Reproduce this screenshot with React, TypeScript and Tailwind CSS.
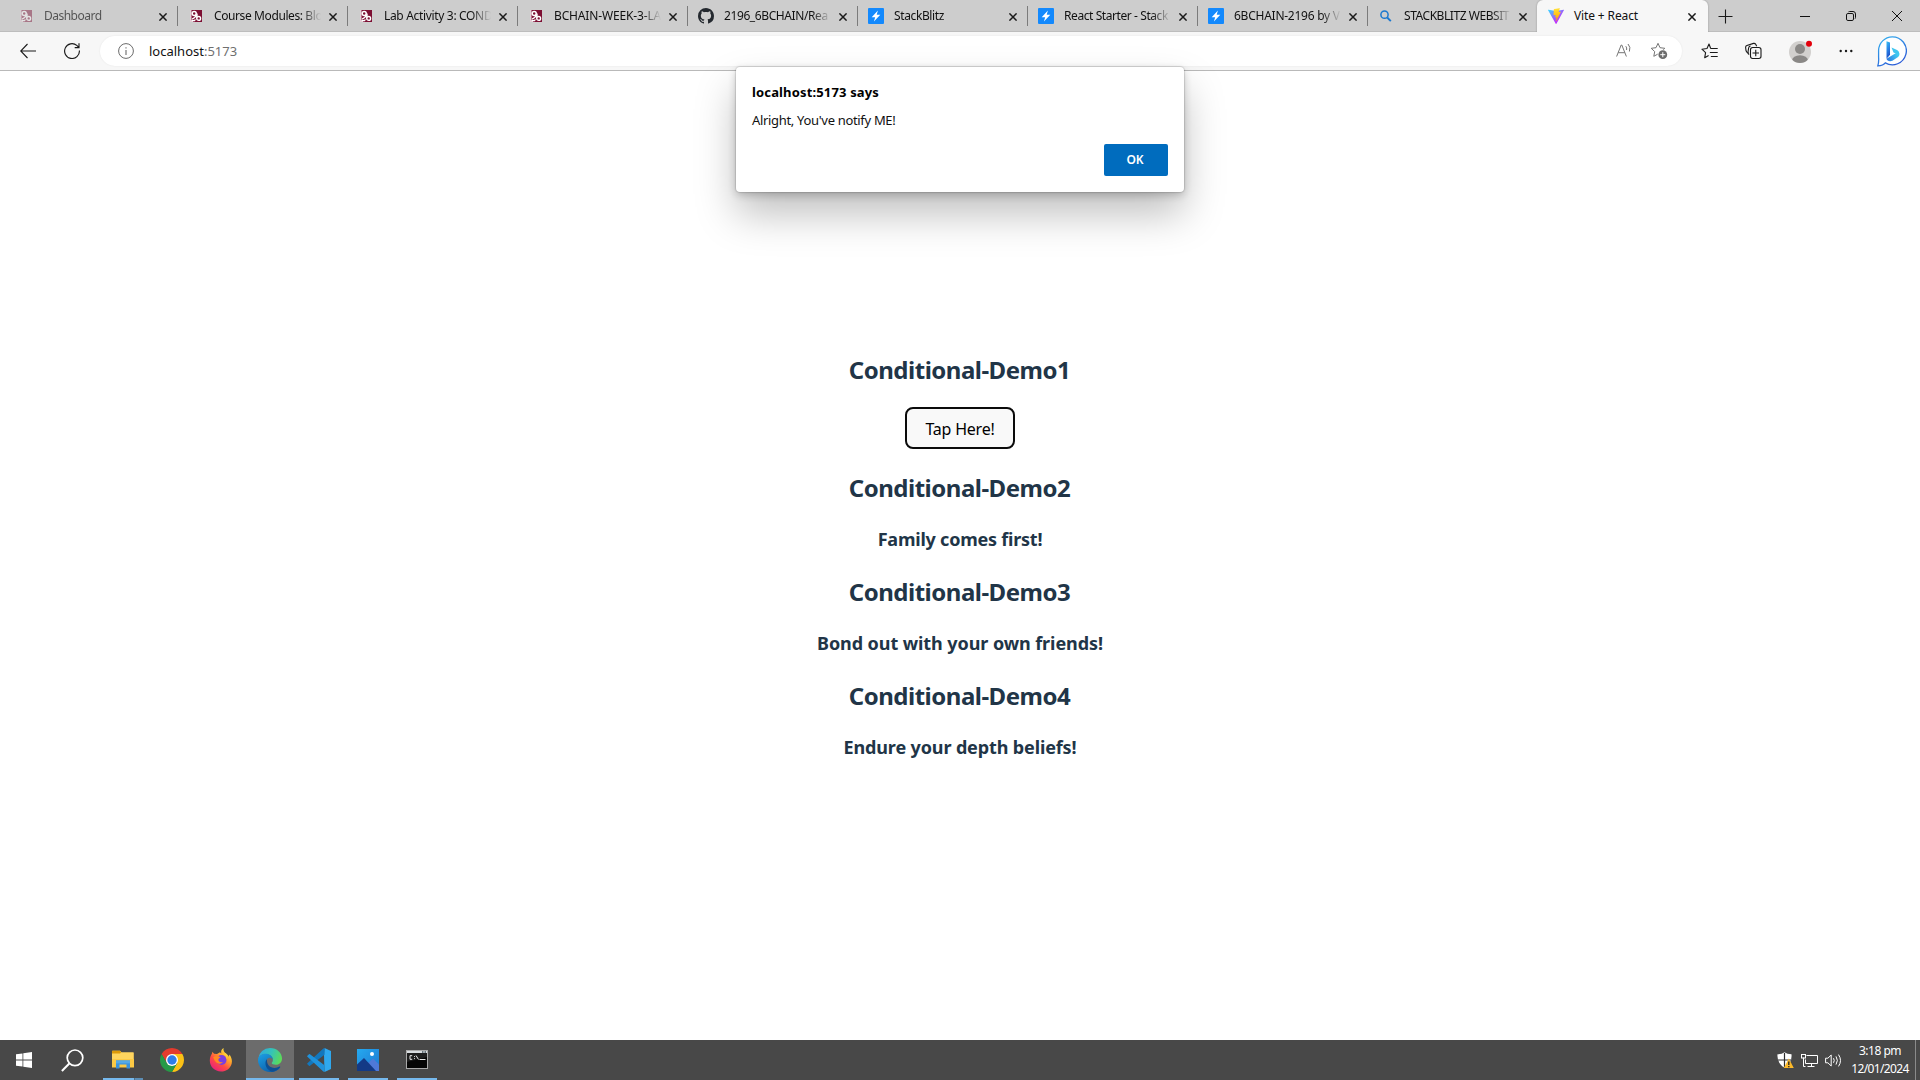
import React from "react";
import { VscGithubInverted } from "react-icons/vsc";

type TabInfo = { title: string; icon: React.ReactNode; tracking: string; faded?: boolean };

function MoodleIcon({ dim }: { dim?: boolean }) {
  return (
    <svg width="12" height="12" viewBox="0 0 12 12" className={dim ? "-ml-px opacity-45" : "-ml-px"}>
      <rect width="12" height="12" fill="#7d0f33" />
      <path d="M0 6.500V12h3.500L1.500 9.500V0H0z" fill="#e3ccd4" />
      <circle cx="4.200" cy="3.600" r="2" fill="#7d0f33" stroke="#fff" strokeWidth="1.500" />
      <path d="M6.300 4.500c-.3 2-1.500 3.500-4.300 4.600M7 3.600v5.600" fill="none" stroke="#fff" strokeWidth="1.400" />
      <circle cx="8.700" cy="8.400" r="1.900" fill="#7d0f33" stroke="#fff" strokeWidth="1.400" />
      <path d="M2 10.600h2.600l.8-1.200" fill="none" stroke="#fff" strokeWidth="1.100" />
    </svg>
  );
}

function StackBlitzIcon() {
  return (
    <svg width="16" height="16" viewBox="0 0 16 16">
      <rect width="16" height="16" rx="1" fill="#1389fd" />
      <path d="M9.900 2.600 3.700 9.200h3.500L5.900 13.400l6.400-6.600H8.700z" fill="#fff" />
    </svg>
  );
}

function BlueSearchIcon() {
  return (
    <svg width="16" height="16" viewBox="0 0 16 16" fill="none" stroke="#1b78cf">
      <circle cx="6.500" cy="6.700" r="3.600" strokeWidth="1.500" />
      <path d="m9.200 9.500 3.600 3.600" strokeWidth="1.900" />
    </svg>
  );
}

function ViteIcon() {
  return (
    <svg width="16" height="16" viewBox="0 0 256 257">
      <defs>
        <linearGradient id="viteA" x1="-.828%" x2="57.636%" y1="7.652%" y2="78.411%">
          <stop offset="0%" stopColor="#41D1FF" />
          <stop offset="100%" stopColor="#BD34FE" />
        </linearGradient>
        <linearGradient id="viteB" x1="43.376%" x2="50.316%" y1="2.242%" y2="89.03%">
          <stop offset="0%" stopColor="#FFEA83" />
          <stop offset="8.333%" stopColor="#FFDD35" />
          <stop offset="100%" stopColor="#FFA800" />
        </linearGradient>
      </defs>
      <path fill="url(#viteA)" d="M255.153 37.938L134.897 252.976c-2.483 4.440-8.862 4.466-11.382.048L.875 37.958c-2.746-4.814 1.371-10.646 6.827-9.670l120.385 21.517a6.537 6.537 0 0 0 2.322-.004l117.867-21.483c5.438-.991 9.574 4.796 6.877 9.620Z" />
      <path fill="url(#viteB)" d="M185.432.063L96.440 17.501a3.268 3.268 0 0 0-2.634 3.014l-5.474 92.456a3.268 3.268 0 0 0 3.997 3.378l24.777-5.718c2.318-.535 4.413 1.507 3.936 3.838l-7.361 36.047c-.495 2.426 1.782 4.500 4.151 3.780l15.304-4.649c2.372-.720 4.652 1.360 4.150 3.788l-11.698 56.621c-.732 3.542 3.979 5.473 5.943 2.437l1.313-2.028l72.516-144.720c1.215-2.423-.880-5.186-3.540-4.672l-25.505 4.922c-2.396.462-4.435-1.770-3.759-4.114l16.646-57.705c.677-2.350-1.370-4.583-3.769-4.113Z" />
    </svg>
  );
}

function CloseX() {
  return (
    <svg width="8" height="8" viewBox="0 0 8 8" stroke="#1a1a1a" strokeWidth="1.5" fill="none">
      <path d="m.4.4 7.200 7.200M7.600.4.4 7.600" />
    </svg>
  );
}

const tabs: TabInfo[] = [
  { title: "Dashboard", icon: <MoodleIcon dim />, tracking: "tracking-[-0.51px]", faded: true },
  { title: "Course Modules: Blo", icon: <MoodleIcon />, tracking: "tracking-[-0.4px]" },
  { title: "Lab Activity 3: COND", icon: <MoodleIcon />, tracking: "tracking-[-0.33px]" },
  { title: "BCHAIN-WEEK-3-LA", icon: <MoodleIcon />, tracking: "tracking-[-0.15px]" },
  { title: "2196_6BCHAIN/Rea", icon: <VscGithubInverted size={16} color="#24292f" />, tracking: "tracking-[-0.4px]" },
  { title: "StackBlitz", icon: <StackBlitzIcon />, tracking: "tracking-[-0.38px]" },
  { title: "React Starter - Stack", icon: <StackBlitzIcon />, tracking: "tracking-[-0.42px]" },
  { title: "6BCHAIN-2196 by V", icon: <StackBlitzIcon />, tracking: "tracking-[-0.25px]" },
  { title: "STACKBLITZ WEBSIT", icon: <BlueSearchIcon />, tracking: "tracking-[-0.45px]" },
];

function Tab({ tab }: { tab: TabInfo }) {
  return (
    <div className="flex h-8 w-[170px] shrink-0 items-center">
      <div className="ml-[10px] flex w-4 shrink-0 justify-center">{tab.icon}</div>
      <div className={`ml-[10px] w-[107px] whitespace-nowrap text-xs leading-8 [mask-image:linear-gradient(to_right,#000_82%,transparent_100%)] ${tab.tracking} ${tab.faded ? "text-[#555]" : "text-[#111]"}`}>
        {tab.title}
      </div>
      <div className="ml-[7.5px] flex h-8 items-center pt-px">
        <CloseX />
      </div>
      <div className="ml-auto h-5 w-px bg-[#7b7b7b]" />
    </div>
  );
}

function TabStrip() {
  return (
    <div className="flex h-8 bg-[#cdcdcd] pl-2 shadow-[inset_0_-1px_0_#bdbdbd]">
      {tabs.map((t) => (
        <Tab key={t.title} tab={t} />
      ))}
      <div className="-ml-px flex h-8 w-[171px] items-center rounded-t-md bg-[#f7f7f7] pl-[11px] shadow-[0_0_2px_rgba(0,0,0,0.3)] [clip-path:inset(0_-3px_0_-3px)]">
        <ViteIcon />
        <div className="ml-[10px] w-[114px] text-xs leading-8 tracking-[-0.13px] text-[#111]">Vite + React</div>
        <div className="pt-px">
          <CloseX />
        </div>
      </div>
      <div className="flex w-[35px] items-center justify-center">
        <svg width="15" height="15" viewBox="0 0 15 15" stroke="#1a1a1a" strokeWidth="1.1">
          <path d="M7.500.5v14M.5 7.500h14" />
        </svg>
      </div>
      <div className="ml-auto flex">
        <div className="flex w-[46px] items-center justify-center">
          <svg width="10" height="10" viewBox="0 0 10 10" stroke="#111"><path d="M0 5.500h10" /></svg>
        </div>
        <div className="flex w-[46px] items-center justify-center">
          <svg width="10" height="10" viewBox="0 0 10 10" stroke="#111" fill="none">
            <rect x=".5" y="2.500" width="7" height="7" rx="1.400" />
            <path d="M2.500.8Q3 .5 3.500.5h3.500Q9.500.5 9.500 3v3.500Q9.500 7.300 9 7.700" />
          </svg>
        </div>
        <div className="flex w-[46px] items-center justify-center">
          <svg width="10" height="10" viewBox="0 0 10 10" stroke="#111"><path d="m0 0 10 10M10 0 0 10" /></svg>
        </div>
      </div>
    </div>
  );
}

const starPath =
  "M8 1.300 10 5.700l4.800.6-3.500 3.300.9 4.700L8 12l-4.200 2.300.9-4.700L1.200 6.300 6 5.700z";

function Toolbar() {
  return (
    <div className="flex h-[39px] items-center border-b border-[#b9b9b9] bg-[#f7f7f7]">
      <svg className="ml-5" width="16" height="16" viewBox="0 0 16 16" fill="none" stroke="#1a1a1a" strokeWidth="1.1">
        <path d="M7.500 1 .7 8l6.800 7M.7 8H16" />
      </svg>
      <svg className="ml-7" width="16" height="16" viewBox="0 0 16 16" fill="none" stroke="#1a1a1a" strokeWidth="1.15">
        <path d="M15.400 7.500A7.400 7.400 0 1 1 12.800 2.400L14.800 4.300M15 .3v4.300h-4.300" />
      </svg>
      <div className="ml-5 flex h-[30px] w-[1582px] items-center rounded-full bg-white shadow-[0_0_2px_rgba(0,0,0,0.08)]">
        <svg className="ml-[18px]" width="16" height="16" viewBox="0 0 16 16" fill="none" stroke="#6b6b6b">
          <circle cx="8" cy="8" r="7.400" />
          <path d="M8 7v5M8 4.200v1.300" strokeWidth="1.100" />
        </svg>
        <div className="ml-[15px] text-[13px] leading-[30px] text-[#111]">
          localhost<span className="text-[#6f6f6f]">:5173</span>
        </div>
        <svg className="ml-auto" width="16" height="16" viewBox="0 0 16 16" fill="none" stroke="#757575">
          <path d="M.6 13.500 5.200 2h.6l4.600 11.500M2.200 9.700h6.600" />
          <path d="M9.800 3.200q1.300 1.600.8 3.800M12 1q3 3 1.400 7.500" />
        </svg>
        <svg className="ml-[18px] mr-[14px]" width="18" height="18" viewBox="0 0 18 18" fill="none">
          <path d={starPath} stroke="#757575" strokeLinejoin="round" />
          <circle cx="12.800" cy="12.700" r="5.200" fill="#fff" />
          <circle cx="12.800" cy="12.700" r="4.400" fill="#6b6b6b" />
          <path d="M12.800 10.200v5M10.300 12.700h5" stroke="#fff" />
        </svg>
      </div>
      <svg className="ml-[19px]" width="17" height="16" viewBox="0 0 17 16" fill="none" stroke="#1a1a1a" strokeWidth="1.1" strokeLinejoin="round">
        <path d="M11.200 5.500 9.600 5.200 8 1 6 5.500.9 6.200l3.700 3.500-.9 5L7.600 12.500" />
        <path d="M10.300 5.500h6M9.300 9.500h7M10.300 13.500h6" strokeLinecap="round" />
      </svg>
      <svg className="ml-[27px]" width="17" height="18" viewBox="0 0 17 18" fill="none" stroke="#1a1a1a" strokeWidth="1.1">
        <path d="M3.500 11.200 2.300 10.500Q1.300 9.800 1 8.700L.6 5.300q0-1.400 1.300-1.800L8.500 1.400Q10 1.100 10.700 2.300l1 2" />
        <path d="M4.200 12.500q-1.400-.5-1.200-2.200l.6-4.300q.4-2 2-2" />
        <rect x="5.500" y="5.500" width="10.500" height="11" rx="2.200" fill="#f7f7f7" />
        <path d="M10.750 7.700v6.600M7.500 11h6.500" />
      </svg>
      <svg className="ml-[26px]" width="24" height="26" viewBox="0 0 24 26">
        <defs>
          <clipPath id="avatarClip"><circle cx="12" cy="14" r="11" /></clipPath>
        </defs>
        <circle cx="12" cy="14" r="11" fill="#d2d0ce" />
        <g clipPath="url(#avatarClip)" fill="#8a8886">
          <circle cx="12" cy="11" r="5" />
          <ellipse cx="12" cy="22.500" rx="8" ry="5.200" />
        </g>
        <circle cx="21" cy="5.800" r="3" fill="#e3000b" />
      </svg>
      <svg className="ml-[27px]" width="14" height="4" viewBox="0 0 14 4" fill="#1a1a1a">
        <circle cx="1.700" cy="2" r="1.200" /><circle cx="7" cy="2" r="1.200" /><circle cx="12.300" cy="2" r="1.200" />
      </svg>
      <svg className="ml-6" width="30" height="31" viewBox="0 0 30 31">
        <defs>
          <linearGradient id="bingRing" x1="0" y1="0" x2="0.6" y2="1">
            <stop offset="0" stopColor="#35b5f0" /><stop offset="1" stopColor="#2a5bd7" />
          </linearGradient>
          <linearGradient id="bingB" x1="0" y1="0" x2="0.3" y2="1">
            <stop offset="0" stopColor="#36c2f3" /><stop offset="0.5" stopColor="#2a86e8" /><stop offset="1" stopColor="#1b4fc9" />
          </linearGradient>
          <linearGradient id="bingSwoop" x1="1" y1="0.5" x2="0" y2="1">
            <stop offset="0" stopColor="#3fd0f2" /><stop offset="1" stopColor="#2b6fe0" />
          </linearGradient>
        </defs>
        <path d="M15.300.8a14 14 0 1 1-7 26.100Q6.300 29.700.8 29.900 2 26 1.600 21V14.500A13.800 13.800 0 0 1 15.300.8z" fill="#fff" stroke="url(#bingRing)" strokeWidth="1.300" />
        <path d="M9.500 5.300 13 6.600v12.200l-3.500 4z" fill="url(#bingB)" />
        <path d="M9.500 22.800 21.500 15.500q2.200 2.800-.4 5.600l-5.700 3.700q-2.800 1.200-5-.5-.8-.7-.9-1.500z" fill="url(#bingSwoop)" />
        <path d="m14.500 11.500 5.500 2.600q2.500 1.300 1.800 4.700l-5.300-2.400z" fill="#3fc6ef" />
      </svg>
    </div>
  );
}

function AlertDialog() {
  return (
    <div className="absolute left-[736px] top-[67px] h-[125px] w-[448px] rounded-[4px] bg-white px-4 shadow-[0_0_1px_1px_rgba(0,0,0,0.12),0_3px_8px_rgba(0,0,0,0.2),0_22px_40px_rgba(0,0,0,0.25)]">
      <div className="mt-[14px] text-[13px] font-bold leading-[22px] tracking-[0.15px] text-black">localhost:5173 says</div>
      <div className="mt-[6px] text-[13px] leading-[22px] tracking-[-0.32px] text-[#111]">Alright, You've notify ME!</div>
      <div className="mt-[13px] flex justify-end">
        <button className="h-8 w-16 rounded-[2px] bg-[#006cbe] pr-0.5 text-xs font-semibold leading-[30px] tracking-[-0.1px] text-white">OK</button>
      </div>
    </div>
  );
}

function Heading({ children }: { children: React.ReactNode }) {
  return <h2 className="pr-px text-2xl font-bold leading-9 tracking-[-0.5px]">{children}</h2>;
}

function Page() {
  return (
    <main className="flex h-[969px] flex-col items-center bg-white pt-[281px] text-[#213547]">
      <Heading>Conditional-Demo1</Heading>
      <button className="mt-[19px] h-[42px] w-[110px] rounded-lg border-2 border-[#0b0b0b] bg-[#f9f9f9] pt-px text-base leading-6 tracking-[-0.23px] text-black">
        Tap Here!
      </button>
      <div className="mt-[21px] flex flex-col items-center gap-5">
        <Heading>Conditional-Demo2</Heading>
        <h3 className="-mt-0.5 text-lg font-bold leading-[30px] tracking-[-0.22px]">Family comes first!</h3>
        <Heading>Conditional-Demo3</Heading>
        <h3 className="-mt-0.5 text-lg font-bold leading-[30px] tracking-[-0.08px]">Bond out with your own friends!</h3>
        <Heading>Conditional-Demo4</Heading>
        <h3 className="-mt-0.5 text-lg font-bold leading-[30px] tracking-[-0.13px]">Endure your depth beliefs!</h3>
      </div>
    </main>
  );
}

const taskIcons = {
  start: (
    <svg width="16" height="16" viewBox="0 0 16 16" fill="#fff">
      <path d="M0 2.300 6.500 1.400v6.200H0zM7.300 1.300 16 0v7.600H7.300zM0 8.400h6.500v6.200L0 13.700zM7.300 8.400H16V16l-8.700-1.300z" />
    </svg>
  ),
  search: (
    <svg width="23" height="23" viewBox="0 0 23 23" fill="none" stroke="#fff" strokeWidth="1.700">
      <circle cx="14" cy="8.800" r="7.800" /><path d="M8.300 14.500.9 22" strokeWidth="2" />
    </svg>
  ),
  explorer: (
    <svg width="22" height="20" viewBox="0 0 22 20">
      <path d="M0 1.200Q0 .8.500.8H8l1.500 1.500h11.700q.6 0 .6.6V17H0z" fill="#ffd55e" />
      <path d="M0 1.200Q0 .8.500.8H8l1.200 1.400L8 3.500H0z" fill="#dd9a09" />
      <path d="M0 9h22v8.500H0z" fill="#fcc944" />
      <path d="M4 10.400h14v8H14.500v-3.900h-7v3.900H4z" fill="#3a93dd" />
      <path d="M4 10.400h14v3H4z" fill="#55a9e6" />
    </svg>
  ),
  chrome: (
    <svg width="24" height="24" viewBox="0 0 24 24">
      <path d="M1.610 6A12 12 0 0 1 22.390 6H12L6.800 15z" fill="#e33b2e" />
      <path d="M22.390 6A12 12 0 0 1 12 24l5.200-9L12 6z" fill="#fbc116" />
      <path d="M12 24A12 12 0 0 1 1.610 6l5.190 9 5.200 3 5.200-3z" fill="#269a47" />
      <circle cx="12" cy="12" r="6" fill="#fff" /><circle cx="12" cy="12" r="4.700" fill="#2f7de9" />
    </svg>
  ),
  firefox: (
    <svg width="24" height="24" viewBox="0 0 24 24">
      <defs>
        <linearGradient id="fox" x1="0.85" y1="0.05" x2="0.2" y2="0.95">
          <stop offset="0" stopColor="#fff04a" /><stop offset="0.35" stopColor="#ffa52b" />
          <stop offset="0.65" stopColor="#ff4a45" /><stop offset="1" stopColor="#e8217c" />
        </linearGradient>
      </defs>
      <path d="M14.600 0c-.5 2 .2 3.600 1.800 5 2.300 1.700 3 2.500 3.300 3.700l.9-2.200c2.200 3.300 2.700 6.300 2.100 8.900C21.500 20.300 17.300 23.500 12 23.500 5.600 23.500.8 18.700.8 12.600c0-3 1-5.200 2.200-7l.3-1.800 1.800 2L8 6l3-1.800 1.300 1.200C11.700 3.200 12.500 1 14.600 0z" fill="url(#fox)" />
      <circle cx="12.500" cy="12" r="5" fill="#7a3fe0" />
      <path d="M4.200 9.200q3.400-2.500 7.600.3c-1 .3-2.400 1-2.400 2.100-.3 1.700 1.600 3.300 4.500 2.400-2 3-7.500 2.300-9.700-4.800z" fill="#ff8a22" />
      <path d="M13.500 6.200c3 .2 4.200 2.500 4.100 4.900 1.500-2.500.5-5.200-1.200-6.100z" fill="#ffcf3a" />
    </svg>
  ),
  edge: (
    <svg width="24" height="24" viewBox="0 0 24 24">
      <defs>
        <linearGradient id="edgeTop" x1="0" y1="0.3" x2="1" y2="0.6">
          <stop offset="0" stopColor="#2fa9de" /><stop offset="0.5" stopColor="#35c3b8" /><stop offset="1" stopColor="#5ddc55" />
        </linearGradient>
        <linearGradient id="edgeLow" x1="0.1" y1="0" x2="0.8" y2="1">
          <stop offset="0" stopColor="#1b9de2" /><stop offset="1" stopColor="#0c59a4" />
        </linearGradient>
      </defs>
      <path d="M.2 10.500A12 12 0 0 1 12 0c7 0 12 5 12 10.500 0 4-3 6.300-6.300 6.300-2.300 0-4-.8-4-1.700 0-.7 1.200-1.300 1.200-3.200C14.900 8.500 11.500 6 7.500 6 4 6 1.300 7.800.2 10.500z" fill="url(#edgeTop)" />
      <path d="M0 12C0 8 3.500 5.700 7.500 5.700c4.200 0 7 2.300 7.400 5.800C14 9.900 12 9.400 10.500 10 8.800 11 8 12.700 8 14.300c0 4 3.700 6.500 7.200 6.500 3 0 5.300-1.200 6.300-2 .6-.4 1 .1.600.6A12 12 0 0 1 12 24C5 24 0 18.500 0 12z" fill="url(#edgeLow)" />
      <path d="M8.900 11.200C7 13 6.800 18 10 21.200c1.200 1.200 3 2.300 4.600 2.500 3.200-.7 6-2.300 7.500-4.700.2-.4-.2-.8-.6-.5-5.500 3.300-13.200.6-12.600-7.300z" fill="#0d4f94" />
    </svg>
  ),
  vscode: (
    <svg width="24" height="24" viewBox="0 0 24 24">
      <path d="M17.500 0 24 2.900v18.200L17.500 24 17 6.800z" fill="#2fa8ee" />
      <path d="M17.500 0v6.700L3 17.700q-.5.400-1 0L.4 16.300q-.5-.5 0-1.100L16.300.6z" fill="#1277bd" />
      <path d="M17.500 24v-6.700L3 6.300q-.5-.4-1 0L.4 7.700q-.5.500 0 1.100L16.300 23.400z" fill="#1f92dc" />
    </svg>
  ),
  photos: (
    <svg width="22" height="22" viewBox="0 0 22 22">
      <defs>
        <linearGradient id="sky" x1="0" y1="0" x2="1" y2="1">
          <stop offset="0" stopColor="#25aaf0" /><stop offset="1" stopColor="#1d76d0" />
        </linearGradient>
      </defs>
      <rect width="22" height="22" fill="url(#sky)" />
      <path d="m10 15 6-5.500 6 6V22H10z" fill="#4f79d8" />
      <path d="M0 15.500 7 9l12 13H0z" fill="#133a86" />
      <circle cx="15" cy="5" r="2" fill="#fff" />
    </svg>
  ),
  cmd: (
    <svg width="22" height="19" viewBox="0 0 22 19" className="-mt-px mr-px">
      <rect width="22" height="19" fill="#a9a9a9" />
      <rect x="1" y="1" width="20" height="2" fill="#d9dde0" />
      <rect x="16" y="1" width="1.500" height="2" fill="#68757c" /><rect x="18.500" y="1" width="1.500" height="2" fill="#68757c" />
      <rect x="1" y="3" width="20" height="15" fill="#050505" />
      <path d="M6.200 5.700H4v3.600h2.200M8.500 6v.9M8.500 8.200v.9M10 5.500l2.500 4M13.500 9.500h6" stroke="#e8e8e8" strokeWidth="1" fill="none" />
      <path d="M1 3h20v4L1 12z" fill="#fff" fillOpacity=".1" />
    </svg>
  ),
};

function Task({ icon, state }: { icon: React.ReactNode; state?: "open" | "multi" | "active" }) {
  return (
    <div className={`flex h-10 w-12 flex-col items-center ${state === "active" ? "bg-[#6c6c6c]" : ""}`}>
      <div className="flex h-[38px] items-center pt-[2px]">{icon}</div>
      {state === "open" && <div className="h-0.5 w-10 bg-[#76b9ed]" />}
      {state === "active" && <div className="h-0.5 w-12 bg-[#76b9ed]" />}
      {state === "multi" && (
        <div className="flex h-0.5 w-10">
          <div className="w-[31px] bg-[#76b9ed]" />
          <div className="w-[9px] border-l border-[#4f6f88] bg-[#5c8db4]" />
        </div>
      )}
    </div>
  );
}

function Taskbar() {
  return (
    <footer className="flex h-10 bg-[#484848]">
      <div className="flex w-12 items-center justify-center">{taskIcons.start}</div>
      <div className="flex w-12 items-center justify-center">{taskIcons.search}</div>
      <div className="ml-[3px] flex gap-px">
        <Task icon={taskIcons.explorer} state="multi" />
        <Task icon={taskIcons.chrome} />
        <Task icon={taskIcons.firefox} />
        <Task icon={taskIcons.edge} state="active" />
        <Task icon={taskIcons.vscode} state="open" />
        <Task icon={taskIcons.photos} state="open" />
        <Task icon={taskIcons.cmd} state="open" />
      </div>
      <div className="ml-auto flex items-center">
        <svg width="17" height="17" viewBox="0 0 17 17">
          <path d="M7.500.3Q10 2.200 14.500 2.300 15.300 11 7.500 15.800-.300 11 .500 2.300 5 2.200 7.500.3z" fill="#fff" />
          <path d="M7.500 1v14.500M1 8h13" stroke="#2c2c2c" strokeWidth="1.200" />
          <path d="M11.800 6.500 16.800 16H6.800z" fill="#fbb829" />
          <path d="M11.800 9.500v3.500M11.800 14v1.200" stroke="#222" strokeWidth="1.300" />
        </svg>
        <svg className="ml-[7px]" width="17" height="15" viewBox="0 0 17 15" fill="none" stroke="#fff">
          <path d="M5.500 2.500h11v8h-12V6.500M10.500 10.500v3M6.500 13.500h7M2.500 4.500v9h2" />
          <rect x=".5" y="1.500" width="4" height="3.500" />
        </svg>
        <svg className="ml-[7px]" width="17" height="15" viewBox="0 0 17 15" fill="none" stroke="#fff">
          <path d="M.6 5.200h2.300L6.200 2v11L2.900 9.800H.6z" />
          <path d="M8.500 5.200q1.500 2.300 0 4.600M11 3.400q2.700 4 0 8.200M13.500 1.600q4 5.900 0 11.800" />
        </svg>
        <div className="ml-[8px] flex w-[60px] flex-col items-center pb-px text-xs leading-[17.500px] text-white">
          <div className="tracking-[-0.5px]">3:18 pm</div>
          <div className="tracking-[-0.63px]">12/01/2024</div>
        </div>
        <div className="ml-[5px] mr-1 h-10 w-px bg-[#8a8a8a]" />
      </div>
    </footer>
  );
}

export default function App() {
  return (
    <div className="relative flex h-[1080px] w-[1920px] flex-col overflow-hidden font-['Noto_Sans','Open_Sans',sans-serif]">
      <TabStrip />
      <Toolbar />
      <Page />
      <Taskbar />
      <AlertDialog />
    </div>
  );
}
